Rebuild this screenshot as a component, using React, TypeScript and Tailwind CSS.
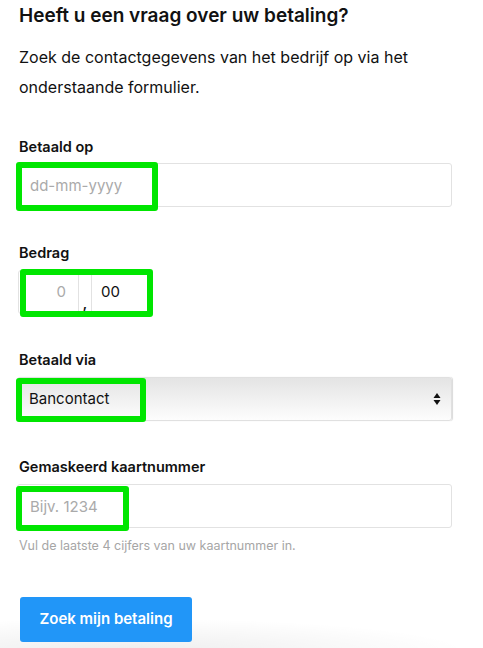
import type { ReactNode } from 'react'

const font = { fontFamily: 'Inter, "Open Sans", Arial, sans-serif' }

function Label({ children }: { children: ReactNode }) {
  return <div className="text-[14.5px] font-semibold leading-[20px] text-[#111]">{children}</div>
}

// green marker drawn over a field
function Marker({ className }: { className: string }) {
  return <div className={`absolute border-[6px] border-[#00e600] rounded-[3px] pointer-events-none ${className}`} />
}

export default function App() {
  return (
    <div className="w-[483px] h-[648px] overflow-hidden bg-white bg-[radial-gradient(ellipse_340px_34px_at_130px_652px,rgba(0,0,0,0.07),transparent)] text-[#111]" style={font}>
      <div className="pl-[19px] pr-[31px]">
        <h1 className="text-[19px] font-semibold leading-[30px] pt-[1px]">Heeft u een vraag over uw betaling?</h1>
        <p className="mt-[11px] text-[16px] leading-[30px]">
          Zoek de contactgegevens van het bedrijf op via het onderstaande formulier.
        </p>

        {/* Betaald op */}
        <div className="mt-[35px]">
          <Label>Betaald op</Label>
          <div className="relative mt-[6px] -ml-[2px]">
            <input
              type="text"
              placeholder="dd-mm-yyyy"
              className="w-full h-[44px] px-[12px] border border-[#e2e2e2] rounded-[3px] text-[15px] placeholder-[#aaa] outline-none"
            />
            <Marker className="-left-[1px] -top-[1px] w-[142px] h-[49px]" />
          </div>
        </div>

        {/* Bedrag */}
        <div className="mt-[36px]">
          <Label>Bedrag</Label>
          <div className="relative mt-[7px] -ml-[1px] w-[132px]">
            <div className="flex h-[44px] border border-[#e2e2e2] rounded-[3px]">
              <input
                type="text"
                placeholder="0"
                className="w-[59px] text-right pr-[12px] text-[15px] placeholder-[#aaa] outline-none"
              />
              <div className="w-[14px] border-x border-[#e2e2e2] flex items-end justify-center pb-[3px] text-[14px] font-semibold leading-none">,</div>
              <input
                type="text"
                defaultValue="00"
                className="w-[57px] pl-[9px] text-[15px] text-[#111] outline-none"
              />
            </div>
            <Marker className="left-[2px] -top-[1px] w-[133px] h-[48px]" />
          </div>
        </div>

        {/* Betaald via */}
        <div className="mt-[36px]">
          <Label>Betaald via</Label>
          <div className="relative mt-[7px] -ml-[2px]">
            <div className="flex items-center justify-between h-[44px] px-[11px] border border-[#e0e0e0] rounded-[3px] bg-gradient-to-b from-[#e4e4e4] to-[#fdfdfd] shadow-[1px_0_1px_rgba(0,0,0,0.15)]">
              <span className="text-[15px]">Bancontact</span>
              <svg width="8" height="14" viewBox="0 0 8 14" className="mr-[-1px]">
                <path d="M4 1 L7.5 6 L0.5 6 Z" fill="#111" />
                <path d="M0.5 8 L7.5 8 L4 13 Z" fill="#111" />
              </svg>
            </div>
            <Marker className="-left-[1px] top-[1px] w-[130px] h-[44px]" />
          </div>
        </div>

        {/* Gemaskeerd kaartnummer */}
        <div className="mt-[36px]">
          <Label>Gemaskeerd kaartnummer</Label>
          <div className="relative mt-[7px] -ml-[2px]">
            <input
              type="text"
              placeholder="Bijv. 1234"
              className="w-full h-[44px] px-[12px] border border-[#e2e2e2] rounded-[3px] text-[15px] placeholder-[#aaa] outline-none"
            />
            <Marker className="-left-[1px] top-[2px] w-[113px] h-[45px]" />
          </div>
          <div className="mt-[9px] text-[12.5px] leading-[18px] text-[#a6a6a6]">
            Vul de laatste 4 cijfers van uw kaartnummer in.
          </div>
        </div>

        <button className="mt-[42px] ml-[1px] w-[172px] h-[45px] bg-[#2196f8] rounded-[3px] text-white text-[15px] font-semibold">
          Zoek mijn betaling
        </button>
      </div>
    </div>
  )
}
